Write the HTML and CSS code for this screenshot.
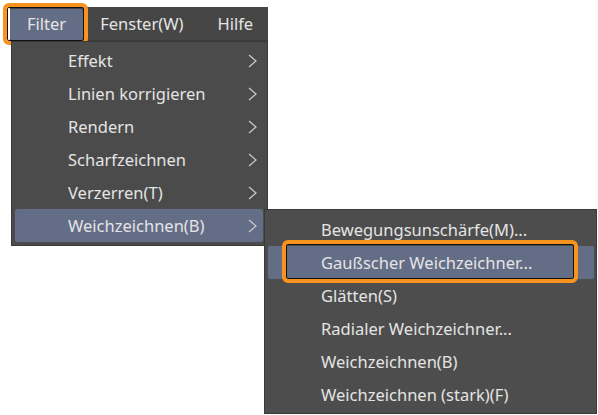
FILE: index.html
```html
<!DOCTYPE html>
<html>
<head>
<meta charset="utf-8">
<link rel="stylesheet" href="styles.css">
</head>
<body>
<div class="screen">
  <div class="menubar">
    <div class="top-item active">Filter<span class="callout callout-top"></span></div>
    <div class="top-item">Fenster(W)</div>
    <div class="top-item">Hilfe</div>
  </div>
  <div class="menu dropdown">
    <div class="row"><span>Effekt</span><svg class="chev" viewBox="0 0 9 14"><path d="M1 1 L8 7 L1 13"/></svg></div>
    <div class="row"><span>Linien korrigieren</span><svg class="chev" viewBox="0 0 9 14"><path d="M1 1 L8 7 L1 13"/></svg></div>
    <div class="row"><span>Rendern</span><svg class="chev" viewBox="0 0 9 14"><path d="M1 1 L8 7 L1 13"/></svg></div>
    <div class="row"><span>Scharfzeichnen</span><svg class="chev" viewBox="0 0 9 14"><path d="M1 1 L8 7 L1 13"/></svg></div>
    <div class="row"><span>Verzerren(T)</span><svg class="chev" viewBox="0 0 9 14"><path d="M1 1 L8 7 L1 13"/></svg></div>
    <div class="row hl"><span>Weichzeichnen(B)</span><svg class="chev" viewBox="0 0 9 14"><path d="M1 1 L8 7 L1 13"/></svg></div>
  </div>
  <div class="menu submenu">
    <div class="row"><span>Bewegungsunschärfe(M)...</span></div>
    <div class="row hl"><span>Gaußscher Weichzeichner...</span><span class="callout callout-sub"></span></div>
    <div class="row"><span>Glätten(S)</span></div>
    <div class="row"><span>Radialer Weichzeichner...</span></div>
    <div class="row"><span>Weichzeichnen(B)</span></div>
    <div class="row"><span>Weichzeichnen (stark)(F)</span></div>
  </div>
</div>
</body>
</html>
```
FILE: styles.css
```css
html, body {
  margin: 0;
  background: #ffffff;
}
body {
  font-family: "Noto Sans", "Open Sans", sans-serif;
  font-size: 16.5px;
  color: #e4e4e4;
}
.screen {
  position: relative;
  display: flow-root;
  width: 598px;
  height: 415px;
}
.menubar {
  display: flex;
  margin: 7px 0 0 10px;
  width: 258px;
  height: 34px;
  background: #464646;
  border-bottom: 1px solid #3c3c3c;
  box-sizing: border-box;
}
.top-item {
  position: relative;
  padding: 0 17px;
  height: 31px;
  line-height: 30px;
  margin-top: 2px;
}
.top-item.active {
  background: #646d86;
  border-radius: 2px;
}
.callout {
  position: absolute;
  border: 4px solid #f7931e;
  border-radius: 6px;
  box-shadow: inset 0 0 0 1px #111;
  box-sizing: border-box;
}
.callout-top {
  left: -7px;
  top: -6px;
  width: 85px;
  height: 42px;
}
.menu {
  position: absolute;
  background: #4b4b4b;
  border: 1px solid #3a3a3a;
  box-sizing: border-box;
  display: flex;
  flex-direction: column;
}
.dropdown {
  left: 11px;
  top: 41px;
  width: 257px;
  height: 205px;
  padding: 2px 4px 0 3px;
}
.row {
  position: relative;
  display: flex;
  align-items: center;
  justify-content: space-between;
  height: 33px;
  flex: none;
  padding: 0 6px 0 53px;
  border-radius: 2px;
}
.row.hl {
  background: #646d86;
}
.chev {
  width: 9px;
  height: 14px;
  fill: none;
  stroke: #c8c8c8;
  stroke-width: 1.3;
}
.submenu {
  left: 264px;
  top: 209px;
  width: 333px;
  height: 205px;
  padding: 3px 2px 0 3px;
  background: #4d4d4d;
}
.callout-sub {
  left: 14px;
  top: -6px;
  width: 296px;
  height: 43px;
}
```
